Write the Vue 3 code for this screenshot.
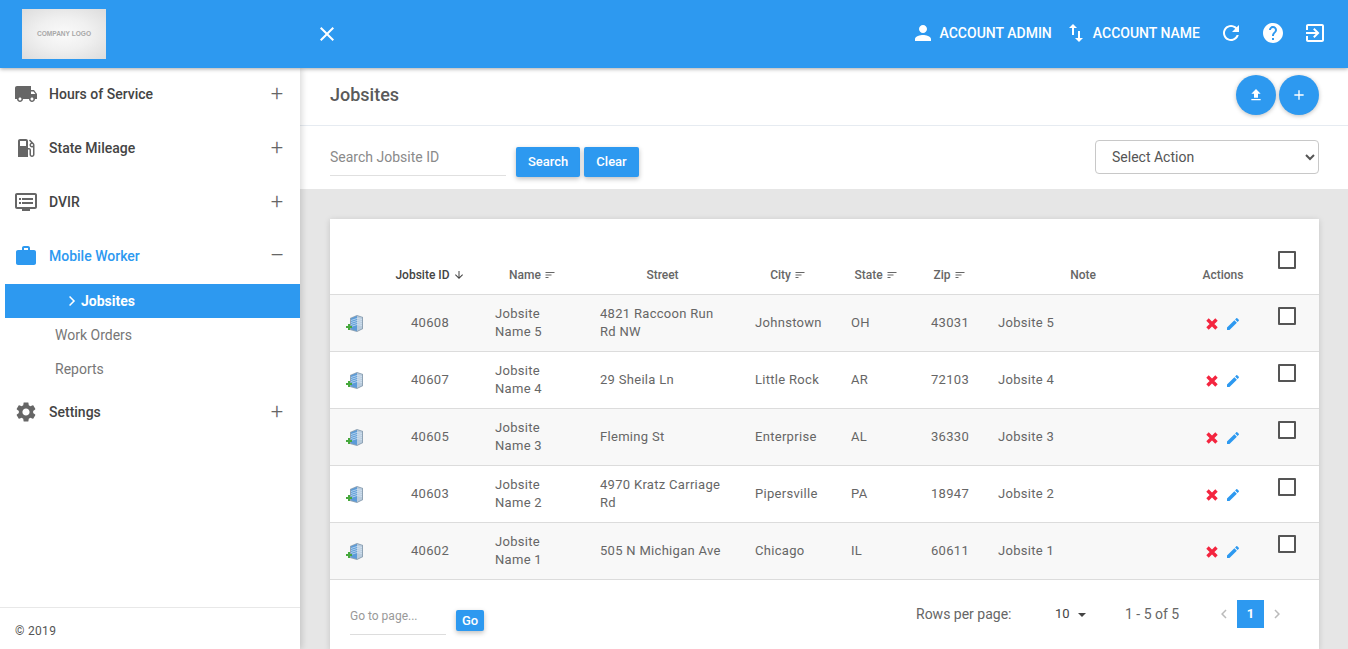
<template>
  <div class="app">
    <header class="topbar">
      <div class="brand">
        <div class="logo"><span>COMPANY LOGO</span></div>
      </div>
      <svg class="close" viewBox="0 0 24 24"><path :d="icons.close" /></svg>
      <div class="top-right">
        <svg class="top-ic" viewBox="0 0 24 24"><path :d="icons.person" /></svg>
        <span class="top-txt admin">ACCOUNT ADMIN</span>
        <svg class="top-ic" viewBox="0 0 24 24"><path :d="icons.swap" /></svg>
        <span class="top-txt acct">ACCOUNT NAME</span>
        <svg class="top-ic act" viewBox="0 0 24 24"><path :d="icons.refresh" /></svg>
        <svg class="top-ic act help" viewBox="0 0 24 24"><path :d="icons.help" /></svg>
        <svg class="top-ic act" viewBox="0 0 24 24"><path :d="icons.exit" /></svg>
      </div>
    </header>

    <div class="body">
      <aside class="sidebar">
        <nav class="menu">
          <div class="item"><svg viewBox="0 0 24 24"><path :d="icons.truck" /></svg><b>Hours of Service</b><i>+</i></div>
          <div class="item"><svg viewBox="0 0 24 24"><path :d="icons.gas" /></svg><b>State Mileage</b><i>+</i></div>
          <div class="item"><svg viewBox="0 0 24 24"><path :d="icons.dvr" /></svg><b>DVIR</b><i>+</i></div>
          <div class="item open"><svg viewBox="0 0 24 24"><path :d="icons.work" /></svg><b>Mobile Worker</b><i>–</i></div>
          <div class="sub active"><svg viewBox="0 0 24 24"><path d="M8.6 5.2 10.4 3.4 19 12l-8.600 8.600-1.800-1.800L15.400 12z" /></svg>Jobsites</div>
          <div class="sub">Work Orders</div>
          <div class="sub">Reports</div>
          <div class="item"><svg viewBox="0 0 24 24"><path :d="icons.gear" /></svg><b>Settings</b><i>+</i></div>
        </nav>
        <div class="copy">© 2019</div>
      </aside>

      <main class="main">
        <div class="titlebar">
          <h1>Jobsites</h1>
          <div class="fabs">
            <button class="fab"><svg viewBox="0 0 24 24"><path :d="icons.upload" /></svg></button>
            <button class="fab"><svg viewBox="0 0 24 24"><path d="M19 13h-6v6h-2v-6H5v-2h6V5h2v6h6z" /></svg></button>
          </div>
        </div>

        <div class="searchbar">
          <input class="search" placeholder="Search Jobsite ID" />
          <button class="btn first">Search</button>
          <button class="btn">Clear</button>
          <select class="action"><option>Select Action</option></select>
        </div>

        <div class="content">
          <div class="card">
            <table>
              <colgroup>
                <col v-for="w in colWidths" :key="w.k" :style="{ width: w.v + 'px' }" />
              </colgroup>
              <thead>
                <tr>
                  <th></th>
                  <th class="sorted">Jobsite ID <svg viewBox="0 0 24 24"><path :d="icons.down" /></svg></th>
                  <th>Name <svg viewBox="0 0 24 24"><path :d="icons.sort" /></svg></th>
                  <th>Street</th>
                  <th>City <svg viewBox="0 0 24 24"><path :d="icons.sort" /></svg></th>
                  <th>State <svg viewBox="0 0 24 24"><path :d="icons.sort" /></svg></th>
                  <th>Zip <svg viewBox="0 0 24 24"><path :d="icons.sort" /></svg></th>
                  <th>Note</th>
                  <th>Actions</th>
                  <th class="chk-cell"><input type="checkbox" class="chk" /></th>
                </tr>
              </thead>
              <tbody>
                <tr v-for="r in rows" :key="r.id">
                  <td class="bld">
                    <svg width="20" height="20" viewBox="0 0 20 20">
                      <path d="M5 5 12 2l6 2v12l-6 3-7-2z" fill="#8fa3b5" />
                      <path d="M6 5.500 12 3v15l-6-1.800z" fill="#5b9bd8" />
                      <path d="M12 3l5 1.500v11L12 18z" fill="#b9cbdc" />
                      <path d="M6 7.500l6-2M6 9.500l6-2M6 11.500l6-2M6 13.500l6-2M12 5.500l5 1M12 7.500l5 1M12 9.500l5 1M12 11.500l5 1" stroke="#d8e8f6" stroke-width=".7" fill="none" />
                      <path d="M3 11h2v2h2v2H5v2H3v-2H1v-2h2z" fill="#46a83c" />
                    </svg>
                  </td>
                  <td class="center">{{ r.id }}</td>
                  <td>{{ r.name }}</td>
                  <td>{{ r.street }}</td>
                  <td>{{ r.city }}</td>
                  <td>{{ r.state }}</td>
                  <td>{{ r.zip }}</td>
                  <td>{{ r.note }}</td>
                  <td class="acts">
                    <svg class="del" viewBox="0 0 14 14"><path d="M2.500 2.500 11.500 11.500M11.500 2.500 2.500 11.500" /></svg>
                    <svg class="edit" viewBox="0 0 24 24"><path :d="icons.pencil" /></svg>
                  </td>
                  <td class="chk-cell"><input type="checkbox" class="chk" /></td>
                </tr>
              </tbody>
            </table>
            <div class="pager">
              <div class="goto">
                <input placeholder="Go to page..." />
                <button class="btn go">Go</button>
              </div>
              <div class="paging">
                <span class="rpp">Rows per page:</span>
                <span class="size">10<em></em></span>
                <span class="range">1 - 5 of 5</span>
                <svg class="arrow" viewBox="0 0 24 24"><path d="M15.400 7.400 14 6l-6 6 6 6 1.400-1.400L10.800 12z" /></svg>
                <span class="page">1</span>
                <svg class="arrow" viewBox="0 0 24 24"><path d="M10 6 8.600 7.400 13.200 12l-4.600 4.600L10 18l6-6z" /></svg>
              </div>
            </div>
          </div>
        </div>
      </main>
    </div>
  </div>
</template>

<script setup>
const icons = {
  close: 'M19 6.41L17.59 5 12 10.59 6.41 5 5 6.41 10.59 12 5 17.59 6.41 19 12 13.41 17.59 19 19 17.59 13.41 12z',
  person: 'M12 12c2.21 0 4-1.79 4-4s-1.79-4-4-4-4 1.79-4 4 1.79 4 4 4zm0 2c-2.67 0-8 1.34-8 4v2h16v-2c0-2.66-5.33-4-8-4z',
  swap: 'M16 17.01V10h-2v7.01h-3L15 21l4-3.99h-3zM9 3L5 6.99h3V14h2V6.99h3L9 3z',
  refresh: 'M17.65 6.35C16.2 4.9 14.21 4 12 4c-4.42 0-7.99 3.58-7.99 8s3.57 8 7.99 8c3.73 0 6.84-2.55 7.73-6h-2.08c-.82 2.33-3.04 4-5.65 4-3.31 0-6-2.69-6-6s2.69-6 6-6c1.66 0 3.14.69 4.22 1.78L13 11h7V4l-2.35 2.35z',
  help: 'M12 2C6.48 2 2 6.48 2 12s4.48 10 10 10 10-4.48 10-10S17.52 2 12 2zm1 17h-2v-2h2v2zm2.07-7.75l-.9.92C13.45 12.9 13 13.5 13 15h-2v-.5c0-1.1.45-2.1 1.17-2.83l1.24-1.26c.37-.36.59-.86.59-1.41 0-1.1-.9-2-2-2s-2 .9-2 2H8c0-2.21 1.79-4 4-4s4 1.79 4 4c0 .88-.36 1.68-.93 2.25z',
  exit: 'M10.09 15.59L11.5 17l5-5-5-5-1.41 1.41L12.67 11H3v2h9.67l-2.58 2.59zM19 3H5c-1.11 0-2 .89-2 2v4h2V5h14v14H5v-4H3v4c0 1.1.89 2 2 2h14c1.1 0 2-.9 2-2V5c0-1.11-.9-2-2-2z',
  truck: 'M20 8h-3V4H3c-1.1 0-2 .9-2 2v11h2c0 1.66 1.34 3 3 3s3-1.34 3-3h6c0 1.66 1.34 3 3 3s3-1.34 3-3h2v-5l-3-4zM6 18.500c-.83 0-1.500-.67-1.500-1.500s.67-1.500 1.500-1.500 1.500.67 1.500 1.500-.67 1.500-1.500 1.500zm13.500-9l1.960 2.500H17V9.500h2.500zm-1.500 9c-.83 0-1.500-.67-1.500-1.500s.67-1.500 1.500-1.500 1.500.67 1.500 1.500-.67 1.500-1.500 1.500z',
  gas: 'M19.77 7.23l.01-.01-3.72-3.72L15 4.560l2.110 2.110c-.94.36-1.610 1.260-1.610 2.330 0 1.380 1.120 2.500 2.500 2.500.36 0 .69-.08 1-.21v7.210c0 .55-.45 1-1 1s-1-.45-1-1V14c0-1.100-.9-2-2-2h-1V5c0-1.100-.9-2-2-2H6c-1.100 0-2 .9-2 2v16h10v-7.500h1.500v5c0 1.380 1.120 2.500 2.500 2.500s2.500-1.120 2.500-2.500V9c0-.69-.28-1.320-.73-1.770zM12 10H6V5h6v5zm6 0c-.55 0-1-.45-1-1s.45-1 1-1 1 .45 1 1-.45 1-1 1z',
  dvr: 'M21 3H3c-1.100 0-2 .9-2 2v12c0 1.100.9 2 2 2h5v2h8v-2h5c1.100 0 1.990-.9 1.990-2L23 5c0-1.100-.9-2-2-2zm0 14H3V5h18v12zm-2-9H8v2h11V8zm0 4H8v2h11v-2zM7 8H5v2h2V8zm0 4H5v2h2v-2z',
  work: 'M20 6h-4V4c0-1.110-.89-2-2-2h-4c-1.110 0-2 .89-2 2v2H4c-1.110 0-1.990.89-1.990 2L2 19c0 1.110.89 2 2 2h16c1.110 0 2-.89 2-2V8c0-1.110-.89-2-2-2zm-6 0h-4V4h4v2z',
  gear: 'M19.140 12.940c.04-.3.06-.61.06-.94 0-.32-.02-.64-.07-.94l2.030-1.580c.18-.14.23-.41.12-.61l-1.920-3.320c-.12-.22-.37-.29-.59-.22l-2.390.96c-.5-.38-1.030-.7-1.620-.94l-.36-2.540c-.04-.24-.24-.41-.48-.41h-3.840c-.24 0-.43.17-.47.41l-.36 2.540c-.59.24-1.130.57-1.620.94l-2.390-.96c-.22-.08-.47 0-.59.22L2.740 8.870c-.12.21-.08.47.12.61l2.030 1.580c-.05.3-.09.63-.09.94s.02.64.07.94l-2.030 1.580c-.18.14-.23.41-.12.61l1.920 3.320c.12.22.37.29.59.22l2.390-.96c.5.38 1.030.7 1.620.94l.36 2.540c.05.24.24.41.48.41h3.840c.24 0 .44-.17.47-.41l.36-2.540c.59-.24 1.130-.56 1.620-.94l2.390.96c.22.08.47 0 .59-.22l1.920-3.320c.12-.22.07-.47-.12-.61l-2.010-1.580zM12 15.600c-1.980 0-3.600-1.620-3.600-3.600s1.620-3.600 3.600-3.600 3.600 1.620 3.600 3.600-1.620 3.600-3.600 3.600z',
  upload: 'M9 16h6v-6h4l-7-7-7 7h4zm-4 2h14v2H5z',
  down: 'M20 12l-1.410-1.410L13 16.170V4h-2v12.170l-5.580-5.590L4 12l8 8 8-8z',
  sort: 'M3 18h6v-2H3v2zM3 6v2h18V6H3zm0 7h12v-2H3v2z',
  pencil: 'M3 17.250V21h3.750L17.810 9.940l-3.750-3.750L3 17.250zM20.710 7.040c.39-.39.39-1.020 0-1.410l-2.340-2.340c-.39-.39-1.020-.39-1.410 0l-1.830 1.830 3.750 3.750 1.830-1.830z'
}

const colWidths = [50, 100, 105, 155, 96, 80, 67, 200, 80, 56].map((v, k) => ({ k, v }))

const rows = [
  { id: 40608, name: 'Jobsite Name 5', street: '4821 Raccoon Run Rd NW', city: 'Johnstown', state: 'OH', zip: '43031', note: 'Jobsite 5' },
  { id: 40607, name: 'Jobsite Name 4', street: '29 Sheila Ln', city: 'Little Rock', state: 'AR', zip: '72103', note: 'Jobsite 4' },
  { id: 40605, name: 'Jobsite Name 3', street: 'Fleming St', city: 'Enterprise', state: 'AL', zip: '36330', note: 'Jobsite 3' },
  { id: 40603, name: 'Jobsite Name 2', street: '4970 Kratz Carriage Rd', city: 'Pipersville', state: 'PA', zip: '18947', note: 'Jobsite 2' },
  { id: 40602, name: 'Jobsite Name 1', street: '505 N Michigan Ave', city: 'Chicago', state: 'IL', zip: '60611', note: 'Jobsite 1' }
]
</script>

<style>
html, body { margin: 0; overflow: hidden; }
</style>

<style scoped>
.app { height: 649px; overflow: hidden; display: flex; flex-direction: column; font-family: Roboto, "Liberation Sans", sans-serif; color: #666; }
button, input, select { font-family: inherit; }

.topbar { height: 68px; flex: none; background: #2d99f0; display: flex; align-items: center; color: #fff; box-shadow: 0 1px 4px rgba(0,0,0,.35); position: relative; z-index: 3; }
.brand { width: 315px; padding-left: 22px; box-sizing: border-box; }
.logo { width: 84px; height: 50px; margin-top: -1px; background: radial-gradient(ellipse at center, #fafafa 0, #f0f0f0 45%, #dcdcdc 100%); display: flex; align-items: center; justify-content: center; }
.logo span { font: 700 8px/1 "Liberation Sans", sans-serif; color: #a8a8a8; transform: scaleX(.82); white-space: nowrap; }
.close { width: 24px; height: 24px; fill: #fff; }
.top-right { margin-left: auto; display: flex; align-items: center; padding-right: 21px; margin-top: -2px; }
.top-ic { width: 24px; height: 24px; fill: #fff; flex: none; }
.top-txt { font-size: 14px; font-weight: 500; white-space: nowrap; margin-left: 5px; }
.admin { margin-right: 12px; }
.acct { margin-right: 10px; }
.act { margin-left: 9px; margin-right: 9px; }
.act:last-child { margin-right: 0; }
.help { margin-left: 9px; }

.body { flex: 1; display: flex; min-height: 0; }
.sidebar { width: 300px; flex: none; background: #fff; box-shadow: 2px 0 6px rgba(0,0,0,.15); display: flex; flex-direction: column; position: relative; z-index: 2; }
.menu { flex: 1; }
.item { height: 52px; margin-bottom: 2px; display: flex; align-items: center; padding: 0 14px; color: #444; }
.item svg { width: 24px; height: 24px; fill: #666; flex: none; margin-right: 11px; }
.item b { flex: 1; font-size: 14px; font-weight: 500; }
.item i { font-style: normal; font-weight: 300; font-size: 22px; color: #666; line-height: 1; margin-right: 2px; width: 14px; text-align: center; }
.item.open { color: #2d99f0; }
.item.open svg { fill: #2d99f0; }
.sub { height: 34px; margin-left: 5px; padding-left: 50px; display: flex; align-items: center; font-size: 14px; color: #777; }
.sub.active { background: #2d99f0; color: #fff; font-weight: 700; padding-left: 59px; }
.sub.active svg { width: 14px; height: 14px; fill: #fff; margin-right: 3px; }
.copy { height: 42px; border-top: 1px solid #e8e8e8; padding: 16px 0 0 15px; box-sizing: border-box; font-size: 12px; color: #555; letter-spacing: .3px; }

.main { flex: 1; min-width: 0; display: flex; flex-direction: column; background: #e6e6e6; }
.titlebar { height: 58px; flex: none; box-sizing: border-box; background: #fff; border-bottom: 1px solid #e6ebf1; display: flex; align-items: center; justify-content: space-between; padding: 0 29px 0 30px; }
.titlebar h1 { margin: 0 0 4px; font-size: 18px; font-weight: 500; color: #5a5a5a; }
.fabs { display: flex; gap: 3px; margin-bottom: 4px; }
.fab { width: 40px; height: 40px; border: none; border-radius: 50%; background: #2d99f0; padding: 0; display: flex; align-items: center; justify-content: center; box-shadow: 0 1px 4px rgba(0,0,0,.25); }
.fab svg { width: 16px; height: 16px; fill: #fff; }
.searchbar { height: 63px; flex: none; box-sizing: border-box; background: #fff; display: flex; align-items: center; padding: 0 29px 0 30px; }
.search { width: 176px; height: 36px; margin-top: 0; border: none; border-bottom: 1px solid #e0e0e0; outline: none; padding: 0; font-size: 14px; color: #666; box-sizing: border-box; }
.search::placeholder { color: #8a8a8a; }
.btn { height: 30px; border: none; border-radius: 2px; background: #2d99f0; color: #fff; font-size: 13px; font-weight: 500; padding: 0 12px; box-shadow: 0 2px 5px rgba(0,0,0,.25); }
.searchbar .btn { margin-top: 8px; margin-left: 4px; }
.searchbar .btn.first { margin-left: 10px; }
.action { margin-left: auto; width: 224px; height: 34px; border: 1px solid #c8c8c8; border-radius: 4px; background: #fff; color: #555; font-size: 14px; padding: 0 12px; margin-top: -2px; }

.content { flex: 1; padding: 30px 29px 0 30px; min-height: 0; }
.card { background: #fff; box-shadow: 0 1px 6px rgba(0,0,0,.15); }
table { width: 100%; table-layout: fixed; border-collapse: collapse; font-size: 13px; letter-spacing: .3px; }
th { height: 75px; box-sizing: border-box; vertical-align: bottom; padding: 0 0 12px; font-size: 12px; font-weight: 500; color: #666; text-align: center; border-bottom: 1px solid #dcdcdc; white-space: nowrap; letter-spacing: 0; }
th svg { width: 12px; height: 12px; fill: #666; vertical-align: -2px; }
th.sorted { color: #444; }
th.sorted svg { fill: #444; }
td { height: 57px; box-sizing: border-box; padding: 0 15px; line-height: 18px; color: #666; border-bottom: 1px solid #dcdcdc; }
tbody tr:nth-child(odd) { background: #f8f8f8; }
td.center { text-align: center; }
td.bld { padding: 0 0 0 15px; }
td.bld svg { display: block; }
td.acts { padding: 2px 0 0; text-align: center; white-space: nowrap; font-size: 0; }
.del { width: 14px; height: 14px; fill: none; stroke: #f4253f; stroke-width: 3.4; vertical-align: middle; margin-right: 6px; }
.edit { width: 16px; height: 16px; fill: #2d99f0; vertical-align: middle; }
.chk-cell { padding: 0 0 0 15px; vertical-align: top; text-align: left; }
th.chk-cell { padding-top: 32px; vertical-align: top; }
td.chk-cell { padding-top: 12px; }
.chk { appearance: none; display: block; margin: 0; width: 18px; height: 18px; box-sizing: border-box; border: 2px solid #555; border-radius: 1px; background: #fff; }

.pager { height: 70px; display: flex; align-items: flex-start; justify-content: space-between; padding: 0 33px 0 20px; }
.goto { display: flex; align-items: flex-start; margin-top: 19px; }
.goto input { width: 96px; height: 36px; box-sizing: border-box; border: none; border-bottom: 1px solid #ddd; outline: none; padding: 0; font-size: 12px; }
.goto input::placeholder { color: #999; }
.btn.go { height: 21px; padding: 0 6px; font-size: 13px; margin: 11px 0 0 10px; }
.paging { display: flex; align-items: center; margin-top: 20px; font-size: 14px; color: #666; height: 28px; }
.rpp { width: 139px; }
.size { width: 70px; color: #444; font-size: 13px; display: flex; align-items: center; }
.size em { border: 4.5px solid transparent; border-top-color: #444; border-bottom: none; margin: 2px 0 0 8px; }
.range { width: 90px; }
.arrow { width: 18px; height: 18px; fill: #bbb; }
.page { width: 27px; height: 28px; background: #2d99f0; color: #fff; font-weight: 700; font-size: 13px; display: flex; align-items: center; justify-content: center; margin: 0 4px; }
</style>
